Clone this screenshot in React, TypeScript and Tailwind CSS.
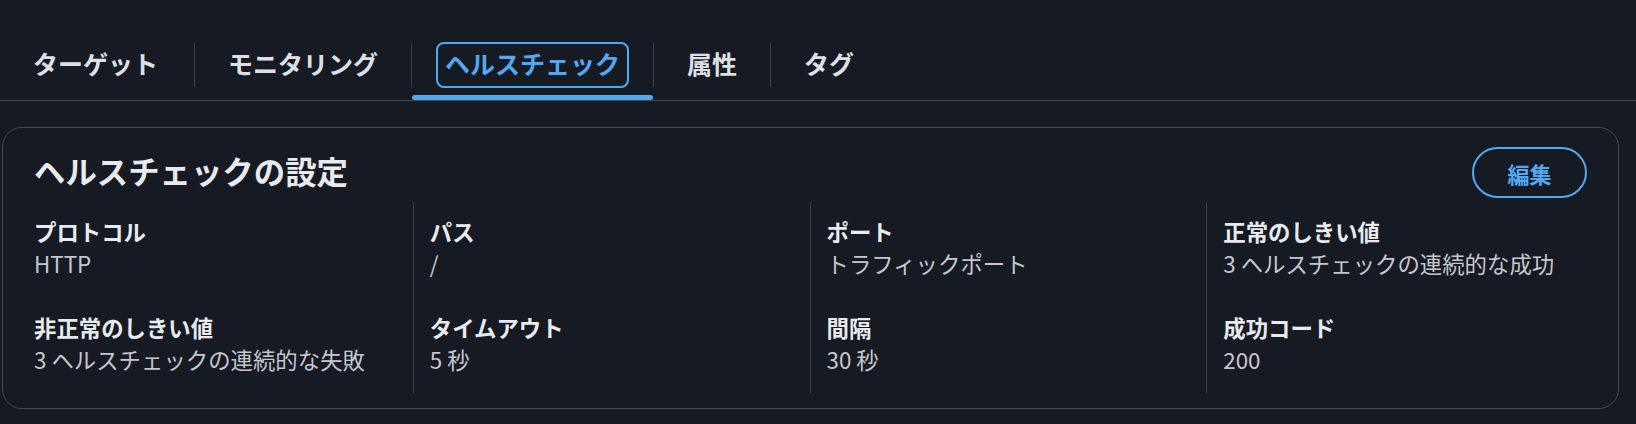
import React from "react";

const tabs = ["ターゲット", "モニタリング", "ヘルスチェック", "属性", "タグ"];

const rows: [string, string][][] = [
  [
    ["プロトコル", "HTTP"],
    ["非正常のしきい値", "3 ヘルスチェックの連続的な失敗"],
  ],
  [
    ["パス", "/"],
    ["タイムアウト", "5 秒"],
  ],
  [
    ["ポート", "トラフィックポート"],
    ["間隔", "30 秒"],
  ],
  [
    ["正常のしきい値", "3 ヘルスチェックの連続的な成功"],
    ["成功コード", "200"],
  ],
];

export default function App() {
  return (
    <div
      className="w-[1636px] h-[424px] bg-[#161b23] overflow-hidden"
      style={{ fontFamily: '"Noto Sans CJK JP", "Noto Sans", sans-serif' }}
    >
      <div className="flex items-start border-b border-[#444953] h-[101px]">
        {tabs.map((t, i) => {
          const active = i === 2;
          return (
            <React.Fragment key={t}>
              {i > 0 && <div className="w-px h-[44px] mt-[43px] bg-[#3c4049]" />}
              <div className="flex flex-col items-stretch">
                <div className={"pl-[24px] pt-[42px] " + (i === 0 ? "pr-[27px]" : "pr-[24px]")}>
                  <div
                    className={
                      "h-[46px] flex items-center px-[7px] pb-[3px] border-2 rounded-[8px] text-[25px] font-bold leading-none " +
                      (active ? "border-[#52a9f2] text-[#52a9f2]" : "border-transparent text-[#dfe0e4]")
                    }
                  >
                    {t}
                  </div>
                </div>
                <div className={"mt-[7px] h-[5px] rounded-full " + (active ? "bg-[#52a9f2]" : "")} />
              </div>
            </React.Fragment>
          );
        })}
      </div>

      <div className="mt-[26px] ml-[2px] mr-[17px] border border-[#444953] rounded-[20px] px-[31px]">
        <div className="flex items-center justify-between pt-[19px]">
          <h2 className="text-[31.4px] font-bold text-[#e9eaee] leading-none pb-[3px]">ヘルスチェックの設定</h2>
          <button className="h-[51px] w-[115px] rounded-full border-2 border-[#52a9f2] text-[#52a9f2] text-[22px] font-bold leading-none">
            編集
          </button>
        </div>
        <div className="grid grid-cols-4 ml-[-18px] mr-[-16px] mt-[4px] pb-[15px]">
          {rows.map((col, ci) => (
            <div
              key={ci}
              className={"pt-[13px] pb-[18px] " + (ci > 0 ? "pl-[16px] border-l border-[#3c4049]" : "pl-[18px]")}
            >
              {col.map(([label, value], ri) => (
                <div key={ri} className={ri > 0 ? "mt-[32px]" : ""}>
                  <div className="text-[22.4px] leading-[32px] font-bold text-[#e9eaee]">{label}</div>
                  <div className="text-[22.4px] leading-[32px] text-[#c6c7cd]">{value}</div>
                </div>
              ))}
            </div>
          ))}
        </div>
      </div>
    </div>
  );
}
